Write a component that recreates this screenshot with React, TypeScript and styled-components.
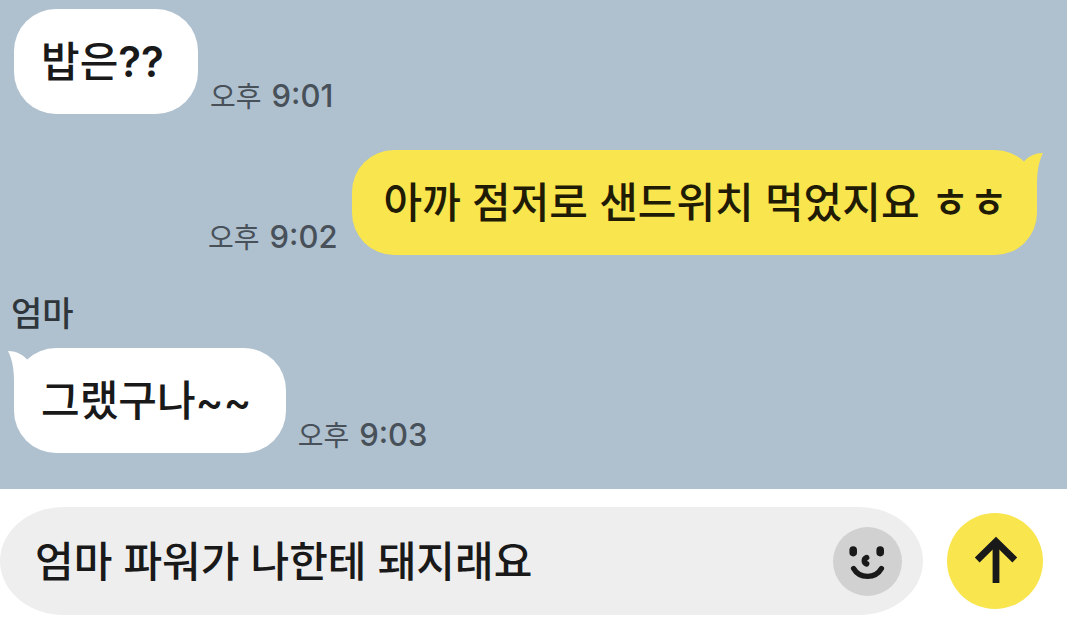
import React, { useState } from 'react';
import styled, { createGlobalStyle } from 'styled-components';

const GlobalStyle = createGlobalStyle`
  *, *::before, *::after {
    box-sizing: border-box;
  }
  body {
    margin: 0;
    background: #ffffff;
    font-family: Inter, "Noto Sans CJK KR", sans-serif;
    font-weight: 500;
  }
`;

const Page = styled.div`
  display: flex;
  flex-direction: column;
  min-height: 100vh;
`;

const Chat = styled.main`
  flex: 1;
  display: flex;
  flex-direction: column;
  justify-content: flex-end;
  gap: 36px;
  padding: 8px 30px 36px 14px;
  background: #afc0cf;
`;

const Message = styled.article<{ $mine?: boolean }>`
  display: flex;
  flex-direction: ${(p) => (p.$mine ? 'row-reverse' : 'row')};
  align-items: flex-end;
  gap: ${(p) => (p.$mine ? 14 : 12)}px;
`;

const Group = styled.section`
  display: flex;
  flex-direction: column;
  gap: 12px;
`;

const Sender = styled.h2`
  margin: 0 0 0 -3px;
  font-size: 34px;
  line-height: 45px;
  font-weight: 500;
  color: #2e353b;
`;

const Bubble = styled.p<{ $mine?: boolean }>`
  position: relative;
  margin: 0;
  padding: ${(p) => (p.$mine ? '25px 29px 24px 32px' : '25px 34px 24px 27px')};
  border-radius: 42px;
  font-size: 42px;
  line-height: 56px;
  color: ${(p) => (p.$mine ? '#1f1b05' : '#191919')};
  background: ${(p) => (p.$mine ? '#f9e54d' : '#ffffff')};
`;

const Marks = styled.span`
  font-weight: 600;
`;

const Tail = styled.svg<{ $mine?: boolean }>`
  position: absolute;
  top: 0;
  ${(p) => (p.$mine ? 'right: -6px; transform: scaleX(-1);' : 'left: -6px;')}
  width: 40px;
  height: 44px;
  fill: ${(p) => (p.$mine ? '#f9e54d' : '#ffffff')};
`;

const Stamp = styled.time`
  display: flex;
  align-items: baseline;
  gap: 10px;
  font-size: 28px;
  line-height: 34px;
  white-space: nowrap;
  color: #485159;
`;

const Meridiem = styled.span`
  font-weight: 400;
`;

const Clock = styled.span`
  font-size: 31px;
`;

const Composer = styled.form`
  display: flex;
  align-items: center;
  gap: 24px;
  padding: 18px 24px 18px 0;
  background: #ffffff;
`;

const Field = styled.div`
  flex: 1;
  min-width: 0;
  display: flex;
  align-items: center;
  height: 108px;
  padding: 0 21px 0 35px;
  border-radius: 64px / 54px;
  background: #eeeeee;
`;

const TextInput = styled.input`
  flex: 1;
  min-width: 0;
  height: 70px;
  padding: 0 0 6px;
  border: 0;
  outline: 0;
  background: transparent;
  font: inherit;
  font-size: 42px;
  color: #191919;
`;

const RoundButton = styled.button<{ $size: number; $color: string }>`
  flex: none;
  display: block;
  width: ${(p) => p.$size}px;
  height: ${(p) => p.$size}px;
  padding: 0;
  border: 0;
  border-radius: 50%;
  background: ${(p) => p.$color};
  cursor: pointer;

  svg {
    display: block;
    width: 100%;
    height: 100%;
  }
`;

function BubbleTail({ mine }: { mine?: boolean }) {
  return (
    <Tail $mine={mine} viewBox="0 0 40 44" aria-hidden="true">
      <path d="M0 3C8 3 14 6 19 11.5L34 24L20 44H6V34C6 20 4 11 0 3Z" />
    </Tail>
  );
}

function SmileIcon() {
  return (
    <svg viewBox="0 0 69 69" fill="none" stroke="#191919" strokeLinecap="round" aria-hidden="true">
      <path d="M20.2 23v2.6M47.2 23v2.6" strokeWidth="7.6" />
      <path d="M33.6 30.6C30.6 31.8 30.6 35.6 33.6 36.8" strokeWidth="5.6" />
      <path d="M20.6 41.5C26.5 52 42.5 52 48.4 41.5" strokeWidth="5.4" />
    </svg>
  );
}

function ArrowUpIcon() {
  return (
    <svg viewBox="0 0 96 96" fill="none" stroke="#191919" strokeWidth="6.8" aria-hidden="true">
      <path d="M49 70V29" />
      <path d="M30.2 47L49 28.5L67.8 47" />
    </svg>
  );
}

function TimeStamp({ clock }: { clock: string }) {
  return (
    <Stamp>
      <Meridiem>오후</Meridiem>
      <Clock>{clock}</Clock>
    </Stamp>
  );
}

export default function App() {
  const [draft, setDraft] = useState('엄마 파워가 나한테 돼지래요');

  return (
    <Page>
      <GlobalStyle />
      <Chat>
        <Message>
          <Bubble>
            밥은<Marks>??</Marks>
          </Bubble>
          <TimeStamp clock="9:01" />
        </Message>
        <Message $mine>
          <Bubble $mine>
            <BubbleTail mine />
            아까 점저로 샌드위치 먹었지요 ㅎㅎ
          </Bubble>
          <TimeStamp clock="9:02" />
        </Message>
        <Group>
          <Sender>엄마</Sender>
          <Message>
            <Bubble>
              <BubbleTail />
              그랬구나~~
            </Bubble>
            <TimeStamp clock="9:03" />
          </Message>
        </Group>
      </Chat>
      <Composer onSubmit={(e) => e.preventDefault()}>
        <Field>
          <TextInput
            type="text"
            aria-label="메시지 입력"
            value={draft}
            onChange={(e) => setDraft(e.target.value)}
          />
          <RoundButton type="button" aria-label="이모티콘" $size={69} $color="#d1d1d1">
            <SmileIcon />
          </RoundButton>
        </Field>
        <RoundButton type="submit" aria-label="전송" $size={96} $color="#f9e54d">
          <ArrowUpIcon />
        </RoundButton>
      </Composer>
    </Page>
  );
}
